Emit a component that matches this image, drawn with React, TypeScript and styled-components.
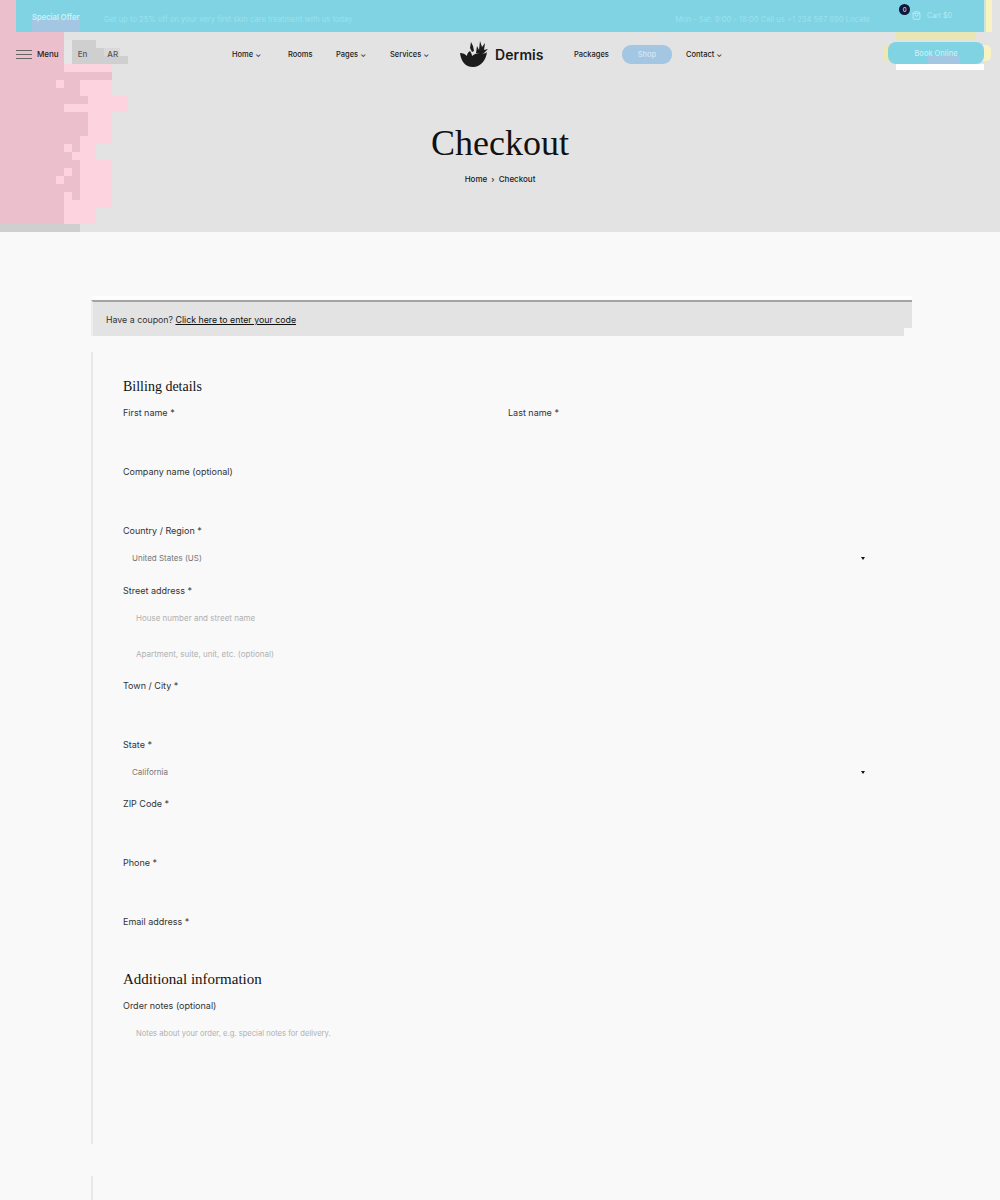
import React from 'react';
import styled, { createGlobalStyle } from 'styled-components';
import { ShoppingBag } from 'lucide-react';

const GlobalStyle = createGlobalStyle`
  * { box-sizing: border-box; }
  html, body { margin: 0; padding: 0; background: #f9f9f9; }
  body { font-family: "Inter", "Noto Sans", sans-serif; color: #1a1a1a; }
`;

const Page = styled.div`
  position: relative;
  width: 1000px;
  height: 1200px;
  overflow: hidden;
`;

const Hero = styled.header`
  position: relative;
  height: 232px;
  background: #e3e3e3;
`;

// decorative blocks behind the left of the header
const Mosaic = styled.svg`
  position: absolute;
  left: 0;
  top: 0;
  width: 130px;
  height: 232px;
`;

const TopBar = styled.div`
  position: relative;
  display: flex;
  justify-content: space-between;
  height: 32px;
  margin: 0 16px;
  padding: 0 32px 0 16px;
  background: #7fd3e2;
  color: #9be2ee;
  font-size: 7.6px;

  &::after {
    content: '';
    position: absolute;
    right: -8px;
    top: 0;
    width: 8px;
    height: 32px;
    background: linear-gradient(90deg, #cfe6d8 0 2px, #f8f3c0 2px);
  }
`;

const Promo = styled.div`
  display: flex;
  gap: 8px;
  align-items: flex-end;
`;

const PromoBadge = styled.span`
  align-self: flex-end;
  width: 48px;
  height: 14px;
  line-height: 0;
  color: #c4f4fb;
  font-weight: 600;
  white-space: nowrap;
  background: #a3c6e2;
`;

const PromoText = styled.span`
  margin-left: 16px;
  padding-bottom: 8px;
  white-space: nowrap;
`;

const TopRight = styled.div`
  display: flex;
  gap: 42px;
  align-items: flex-start;
`;

const Hours = styled.span`
  padding-top: 15px;
  white-space: nowrap;
`;

const CartLink = styled.span`
  position: relative;
  display: flex;
  align-items: center;
  gap: 6px;
  height: 10px;
  margin-top: 10px;
  color: #b5ecf5;
  font-size: 7px;
`;

const CartBadge = styled.span`
  position: absolute;
  left: -13px;
  top: -6px;
  width: 11px;
  height: 11px;
  border-radius: 50%;
  background: #0a1a3c;
  color: #fff;
  font-size: 6px;
  line-height: 11px;
  text-align: center;
`;

const NavRow = styled.nav`
  position: relative;
  display: grid;
  grid-template-columns: 216px 1fr 96px;
  align-items: center;
  height: 44px;
  padding: 0 16px;
  font-size: 7.5px;
  font-weight: 500;
`;

const NavLeft = styled.div`
  display: flex;
  align-items: center;
  font-size: 8px;
`;

const Burger = styled.span`
  position: relative;
  display: block;
  width: 16px;
  height: 9px;
  margin-right: 5px;
  border-top: 1px solid #666;
  border-bottom: 1px solid #666;

  &::after {
    content: '';
    position: absolute;
    left: 0;
    right: 0;
    top: 3px;
    border-top: 1px solid #666;
  }
`;

const Lang = styled.span<{ $ml: number }>`
  margin-left: ${({ $ml }) => $ml}px;
  color: #555;
`;

const NavCenter = styled.div`
  display: flex;
  align-items: center;
`;

const NavItem = styled.span<{ $w: number; $active?: boolean; $ml?: number }>`
  width: ${({ $w }) => $w}px;
  margin-left: ${({ $ml }) => $ml ?? 0}px;
  height: ${({ $active }) => ($active ? '19px' : 'auto')};
  line-height: ${({ $active }) => ($active ? '19px' : 'normal')};
  text-align: ${({ $active }) => ($active ? 'center' : 'left')};
  border-radius: ${({ $active }) => ($active ? '9px' : '0')};
  background: ${({ $active }) => ($active ? '#a3c6e2' : 'transparent')};
  color: ${({ $active }) => ($active ? '#d3e6f4' : '#1a1a1a')};
  white-space: nowrap;
`;

const Logo = styled.div`
  display: flex;
  align-items: center;
  gap: 6px;
  width: 115px;
  font-size: 14px;
  font-weight: 600;
  letter-spacing: 0.1px;
`;

const CtaButton = styled.button`
  position: relative;
  justify-self: end;
  width: 96px;
  height: 22px;
  margin-bottom: 2px;
  border: 0;
  border-radius: 8px;
  background: linear-gradient(#a3c6e2, #a3c6e2) 40px 14px / 32px 8px no-repeat, #7fd3e2;
  color: #c9eff6;
  font: 500 7.5px "Inter", sans-serif;
  box-shadow: -8px 0 0 -3px #eee9b0, 10px 0 0 -3px #f8f3c0;

  &::before {
    content: '';
    position: absolute;
    left: 8px;
    top: -10px;
    width: 80px;
    height: 8px;
    background: #e8e6b4;
  }

  &::after {
    content: '';
    position: absolute;
    left: 8px;
    bottom: -6px;
    width: 88px;
    height: 6px;
    background: #fff;
  }
`;

const PageTitle = styled.div`
  position: relative;
  padding-top: 45px;
  text-align: center;
`;

const Heading = styled.h1`
  margin: 0;
  font: 400 36px/44px "Liberation Serif", serif;
  color: #111;
`;

const Crumbs = styled.div`
  margin-top: 9px;
  font-size: 8px;
  font-weight: 500;
  word-spacing: 2px;
`;

const Content = styled.main`
  margin: 68px 88px 0 91px;
`;

const Notice = styled.div`
  position: relative;
  height: 36px;
  padding-left: 13px;
  border-top: 2px solid #a3a3a3;
  border-left: 2px solid #ededed;
  background: #e3e3e3;
  font-size: 8.8px;
  line-height: 36px;
  color: #333;
  box-shadow: 0 -4px 0 #fdfdfd;

  a {
    color: #111;
    text-decoration: underline;
  }

  &::after {
    content: '';
    position: absolute;
    right: 0;
    bottom: 0;
    width: 8px;
    height: 8px;
    background: #f9f9f9;
  }
`;

const Billing = styled.form`
  margin-top: 16px;
  height: 792px;
  padding: 25px 32px 0 30px;
  border-left: 2px solid #e8e8e8;
`;

const SectionTitle = styled.h3<{ $large?: boolean }>`
  margin: ${({ $large }) => ($large ? '-3px 0 8px' : '0 0 7px')};
  font: 400 ${({ $large }) => ($large ? '15px/20px' : '14px/20px')} "Liberation Serif", serif;
  color: #111;
`;

const TwoCols = styled.div`
  display: grid;
  grid-template-columns: 385px 1fr;
`;

const Field = styled.div<{ $gap?: number }>`
  margin-bottom: ${({ $gap }) => $gap ?? 6}px;
`;

const Label = styled.label`
  display: block;
  height: 17px;
  font-size: 9px;
  line-height: 17px;
  color: #333;
`;

const TextInput = styled.input`
  display: block;
  width: 100%;
  height: 36px;
  padding: 2px 13px 0;
  border: 0;
  outline: 0;
  background: transparent;
  font: 400 8px "Inter", sans-serif;

  &::placeholder {
    color: #b0b0b0;
    opacity: 1;
  }
`;

const SelectBox = styled.div`
  display: flex;
  justify-content: space-between;
  align-items: center;
  height: 36px;
  padding: 2px 15px 0 9px;
  font-size: 8px;
  color: #777;
`;

const Caret = styled.span`
  width: 0;
  height: 0;
  border-left: 2px solid transparent;
  border-right: 2px solid transparent;
  border-top: 3px solid #111;
`;

const Notes = styled.textarea`
  display: block;
  width: 100%;
  height: 100px;
  padding: 15px 13px;
  border: 0;
  outline: 0;
  resize: none;
  background: transparent;
  font: 400 7.6px "Inter", sans-serif;

  &::placeholder {
    color: #b0b0b0;
    opacity: 1;
  }
`;

const LowerRule = styled.div`
  height: 24px;
  margin: 32px 88px 0 91px;
  border-left: 2px solid #e8e8e8;
`;

const dark = '#ecbfcd';
const light = '#fdd3df';
const grey = '#cfcfcf';

// x, y, w, h, fill, read off the 8px grid of the picture
const mosaicRects: [number, number, number, number, string][] = [
  [0, 0, 16, 32, dark],
  [0, 32, 64, 192, dark],
  [64, 64, 48, 8, light],
  [64, 72, 48, 8, dark],
  [64, 80, 16, 16, dark],
  [56, 80, 8, 8, light],
  [80, 80, 32, 16, light],
  [64, 96, 24, 8, dark],
  [88, 96, 40, 8, light],
  [64, 104, 64, 8, light],
  [64, 112, 24, 24, dark],
  [88, 112, 24, 24, light],
  [64, 136, 16, 8, dark],
  [80, 136, 32, 8, light],
  [64, 144, 8, 8, light],
  [72, 144, 8, 8, dark],
  [80, 144, 16, 8, light],
  [64, 152, 8, 8, dark],
  [72, 152, 24, 8, light],
  [64, 160, 16, 8, dark],
  [80, 160, 32, 40, light],
  [64, 168, 8, 8, light],
  [72, 168, 8, 8, dark],
  [56, 176, 8, 8, light],
  [64, 176, 16, 16, dark],
  [64, 192, 8, 8, light],
  [72, 192, 8, 8, dark],
  [64, 200, 48, 8, light],
  [64, 208, 32, 16, light],
  [0, 224, 80, 8, grey],
  [64, 40, 8, 24, '#e6e6e6'],
  [72, 40, 24, 24, grey],
  [88, 48, 16, 16, grey],
  [104, 48, 16, 8, '#d9d9d9'],
  [104, 56, 24, 8, grey],
];

const LogoMark = () => (
  <svg width="30" height="28" viewBox="0 0 30 28" fill="#1c1c1c">
    <path d="M1 13c3 0 5 1 7 3 0-2 1-4 3-5 1 2 2 3 2 5 2-2 5-3 9-3 4 1 5 0 6-1-1 8-6 15-14 15S2 21 1 13z" />
    <path d="M17 13l1-7 2 4 1-9 2 6 3-4-1 7 4-1-4 4-3 1z" />
    <path d="M11 8l1-6 2 4 1 5-2 1z" />
  </svg>
);

const App: React.FC = () => (
  <Page>
    <GlobalStyle />
    <Hero>
      <Mosaic viewBox="0 0 130 232">
        {mosaicRects.map(([x, y, w, h, fill], i) => (
          <rect key={i} x={x} y={y} width={w} height={h} fill={fill} />
        ))}
      </Mosaic>
      <TopBar>
        <Promo>
          <PromoBadge>Special Offer</PromoBadge>
          <PromoText>Get up to 25% off on your very first skin care treatment with us today</PromoText>
        </Promo>
        <TopRight>
          <Hours>Mon - Sat: 9:00 - 18:00 Call us +1 234 567 890 Locate</Hours>
          <CartLink>
            <CartBadge>0</CartBadge>
            <ShoppingBag size={9} color="#c9f3f9" />
            Cart $0
          </CartLink>
        </TopRight>
      </TopBar>
      <NavRow>
        <NavLeft>
          <Burger />
          <span>Menu</span>
          <Lang $ml={19}>En</Lang>
          <Lang $ml={20}>AR</Lang>
        </NavLeft>
        <NavCenter>
          <NavItem $w={56}>Home ⌄</NavItem>
          <NavItem $w={48}>Rooms</NavItem>
          <NavItem $w={54}>Pages ⌄</NavItem>
          <NavItem $w={69}>Services ⌄</NavItem>
          <Logo>
            <LogoMark />
            Dermis
          </Logo>
          <NavItem $w={48}>Packages</NavItem>
          <NavItem $w={50} $active>Shop</NavItem>
          <NavItem $w={50} $ml={14}>Contact ⌄</NavItem>
        </NavCenter>
        <CtaButton type="button">Book Online</CtaButton>
      </NavRow>
      <PageTitle>
        <Heading>Checkout</Heading>
        <Crumbs>Home › Checkout</Crumbs>
      </PageTitle>
    </Hero>
    <Content>
      <Notice>
        Have a coupon? <a href="#coupon">Click here to enter your code</a>
      </Notice>
      <Billing>
        <SectionTitle>Billing details</SectionTitle>
        <TwoCols>
          <Field>
            <Label>First name *</Label>
            <TextInput />
          </Field>
          <Field>
            <Label>Last name *</Label>
            <TextInput />
          </Field>
        </TwoCols>
        <Field>
          <Label>Company name (optional)</Label>
          <TextInput />
        </Field>
        <Field $gap={7}>
          <Label>Country / Region *</Label>
          <SelectBox>
            United States (US)
            <Caret />
          </SelectBox>
        </Field>
        <Field>
          <Label>Street address *</Label>
          <TextInput placeholder="House number and street name" />
          <TextInput placeholder="Apartment, suite, unit, etc. (optional)" />
        </Field>
        <Field>
          <Label>Town / City *</Label>
          <TextInput />
        </Field>
        <Field>
          <Label>State *</Label>
          <SelectBox>
            California
            <Caret />
          </SelectBox>
        </Field>
        <Field>
          <Label>ZIP Code *</Label>
          <TextInput />
        </Field>
        <Field>
          <Label>Phone *</Label>
          <TextInput />
        </Field>
        <Field>
          <Label>Email address *</Label>
          <TextInput />
        </Field>
        <SectionTitle $large>Additional information</SectionTitle>
        <Field>
          <Label>Order notes (optional)</Label>
          <Notes placeholder="Notes about your order, e.g. special notes for delivery." />
        </Field>
      </Billing>
    </Content>
    <LowerRule />
  </Page>
);

export default App;
